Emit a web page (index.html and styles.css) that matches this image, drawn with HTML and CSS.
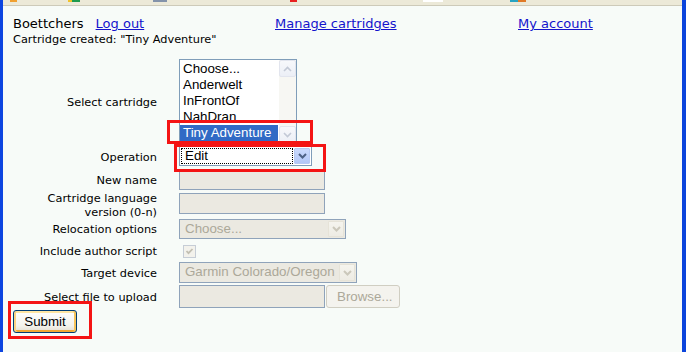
FILE: index.html
```html
<!DOCTYPE html>
<html lang="en">
<head>
<meta charset="utf-8">
<title>Cartridges</title>
<link rel="stylesheet" href="styles.css">
</head>
<body>
<div class="toolbar">
  <span class="bit bit-1"></span><span class="bit bit-2"></span><span class="bit bit-3"></span><span class="bit bit-4"></span><span class="bit bit-5"></span><span class="bit bit-6"></span><span class="bit bit-7"></span><span class="bit bit-8"></span>
</div>
<div class="page">
  <div class="topbar">
    <div class="user"><span>Boettchers</span><a href="#">Log out</a></div>
    <div><a href="#">Manage cartridges</a></div>
    <div><a href="#">My account</a></div>
  </div>
  <div class="status">Cartridge created: "Tiny Adventure"</div>

  <form class="form">
    <div class="label">Select cartridge</div>
    <div class="listbox">
      <div class="items">
        <div class="item">Choose...</div>
        <div class="item">Anderwelt</div>
        <div class="item">InFrontOf</div>
        <div class="item">NahDran</div>
        <div class="item selected">Tiny Adventure</div>
      </div>
      <div class="vscroll">
        <div class="sbtn"><svg width="9" height="6" viewBox="0 0 9 6"><path d="M1 5 L4.5 1.5 L8 5" fill="none" stroke="#c3c9d6" stroke-width="1.6"/></svg></div>
        <div class="strack"></div>
        <div class="sbtn"><svg width="9" height="6" viewBox="0 0 9 6"><path d="M1 1 L4.5 4.5 L8 1" fill="none" stroke="#c3c9d6" stroke-width="1.6"/></svg></div>
      </div>
    </div>

    <div class="label">Operation</div>
    <div class="combo combo-op">
      <div class="combo-text focus">Edit</div>
      <div class="combo-btn"><svg width="9" height="6" viewBox="0 0 9 6"><path d="M1 1 L4.5 4.5 L8 1" fill="none" stroke="#4d6185" stroke-width="2"/></svg></div>
    </div>

    <div class="label">New name</div>
    <div class="field"></div>

    <div class="label">Cartridge language<br>version (0-n)</div>
    <div class="field field-lang"></div>

    <div class="label">Relocation options</div>
    <div class="combo combo-dis combo-reloc">
      <div class="combo-text">Choose...</div>
      <div class="combo-btn"><svg width="9" height="6" viewBox="0 0 9 6"><path d="M1 1 L4.5 4.5 L8 1" fill="none" stroke="#cbc8bb" stroke-width="2"/></svg></div>
    </div>

    <div class="label">Include author script</div>
    <div class="check"><svg width="11" height="11" viewBox="0 0 11 11"><path d="M2.5 5 L4.5 7.2 L8.5 3" fill="none" stroke="#c2bfb2" stroke-width="1.8"/></svg></div>

    <div class="label">Target device</div>
    <div class="combo combo-dis combo-target">
      <div class="combo-text">Garmin Colorado/Oregon</div>
      <div class="combo-btn"><svg width="9" height="6" viewBox="0 0 9 6"><path d="M1 1 L4.5 4.5 L8 1" fill="none" stroke="#cbc8bb" stroke-width="2"/></svg></div>
    </div>

    <div class="label">Select file to upload</div>
    <div class="filerow">
      <div class="field field-file"></div>
      <div class="browse">Browse...</div>
    </div>

    <div class="submitcell"><button type="button" class="submit">Submit</button></div>
  </form>
</div>

<div class="mark mark-a"></div>
<div class="mark mark-b"></div>
<div class="mark mark-c"></div>
</body>
</html>
```

FILE: styles.css
```css
* { box-sizing: border-box; }

html, body { margin: 0; padding: 0; }

body {
  position: relative;
  width: 686px;
  height: 352px;
  overflow: hidden;
  background: #f7fbf8;
  border-left: 3px solid #0d45e0;
  border-right: 4px solid #0b44dc;
  font-family: "DejaVu Sans", Verdana, sans-serif;
  color: #000;
}

.toolbar {
  height: 6px;
  background: #ece9d8;
  border-bottom: 1px solid #cdcab9;
  display: flex;
  align-items: flex-start;
}
.bit { height: 2px; display: block; }
.bit-1 { margin-left: 7px; width: 7px; background: #f0a030; }
.bit-2 { margin-left: 51px; width: 4px; background: #f2c22a; }
.bit-3 { width: 8px; background: #1f9a4e; }
.bit-4 { margin-left: 73px; width: 14px; background: #8493aa; }
.bit-5 { margin-left: 123px; width: 7px; background: #e82020; }
.bit-6 { margin-left: 126px; width: 20px; background: #ffffff; }
.bit-7 { margin-left: 67px; width: 8px; background: #27a3c2; }
.bit-8 { width: 8px; background: #e07a28; }

.page { padding: 10px 0 0 10px; }

a { color: #1414cc; text-decoration: underline; }

.topbar {
  display: grid;
  grid-template-columns: 262px 243px auto;
  font-size: 13px;
  line-height: 16px;
}
.user { display: flex; gap: 12px; }

.status { font-size: 11.33px; line-height: 14px; }

.form {
  margin: 13px 0 0 0;
  display: grid;
  grid-template-columns: 144px auto;
  grid-template-rows: 85px 21px 21px 25px 20px 19px 21px 23px 23px;
  column-gap: 22px;
  row-gap: 2px;
}

.label {
  align-self: center;
  text-align: right;
  font-size: 11.33px;
  line-height: 14px;
}

.listbox, .combo, .field, .browse, .submit, .item {
  font-family: "Liberation Sans", Arial, sans-serif;
  font-size: 13.33px;
}

.listbox {
  align-self: start;
  width: 118px;
  height: 85px;
  border: 1px solid #7f9db9;
  background: #fff;
  display: flex;
}
.items { flex: 1; padding: 1px 1px 0 0; }
.item { height: 16px; line-height: 16px; padding-left: 3px; white-space: nowrap; }
.item.selected { background: #316ac5; color: #fff; }

.vscroll {
  width: 17px;
  display: flex;
  flex-direction: column;
  background: #f7f7f3;
}
.sbtn {
  height: 17px;
  border: 1px solid #e2e5ee;
  border-radius: 2px;
  background: linear-gradient(#f7f8fb, #eceff6);
  display: flex;
  align-items: center;
  justify-content: center;
}
.strack { flex: 1; }

.combo {
  align-self: start;
  height: 20px;
  border: 1px solid #7f9db9;
  background: #fff;
  display: flex;
  padding: 1px;
}
.combo-op { width: 133px; }
.combo-reloc { width: 167px; }
.combo-target { width: 178px; height: 21px; }
.combo-text {
  flex: 1;
  padding-left: 4px;
  line-height: 16px;
  white-space: nowrap;
  overflow: hidden;
}
.combo-text.focus {
  border: 1px dotted #000;
  padding-left: 3px;
  line-height: 14px;
}
.combo-btn {
  width: 16px;
  margin-left: 1px;
  border: 1px solid #b7c9f4;
  border-radius: 1px;
  background: linear-gradient(#cbdafd, #b2c7f7);
  display: flex;
  align-items: center;
  justify-content: center;
}
.combo-dis { background: #ebe9e1; border-color: #8fa3ba; color: #aca899; }
.combo-dis .combo-btn {
  border-color: #e6e3d8;
  background: linear-gradient(#f5f4ee, #eeece4);
}

.field {
  align-self: start;
  width: 146px;
  height: 21px;
  border: 1px solid #8fa3ba;
  background: #ebe9e1;
}
.field-lang { margin-top: 1px; }

.check {
  align-self: start;
  margin: 4px 0 0 4px;
  width: 13px;
  height: 13px;
  border: 1px solid #c6cdd6;
  background: #f3f2ec;
  display: flex;
}

.filerow { display: flex; align-self: start; gap: 1px; }
.field-file { height: 23px; }
.browse {
  width: 74px;
  height: 23px;
  border: 1px solid #d0cec2;
  border-radius: 3px;
  background: #f4f3ee;
  color: #aca899;
  line-height: 21px;
  padding-left: 10px;
}

.submitcell { grid-column: 1 / span 2; align-self: start; }
.submit {
  display: block;
  width: 64px;
  height: 23px;
  margin: 0;
  padding: 0;
  border: 1px solid #003c74;
  border-radius: 3px;
  color: #000;
  background: linear-gradient(#ffffff, #f3f2ec 70%, #e3ddcf);
  box-shadow: inset 2px 0 0 #fbd385, inset -2px 0 0 #f6c45c, inset 0 2px 0 #ffe6a4, inset 0 -2px 0 #f1a834;
}

.mark {
  position: absolute;
  border: 3px solid #f41414;
}
.mark-a { left: 164px; top: 120px; width: 146px; height: 24px; }
.mark-b { left: 171px; top: 144px; width: 152px; height: 28px; }
.mark-c { left: 5px; top: 301px; width: 84px; height: 38px; }
```
